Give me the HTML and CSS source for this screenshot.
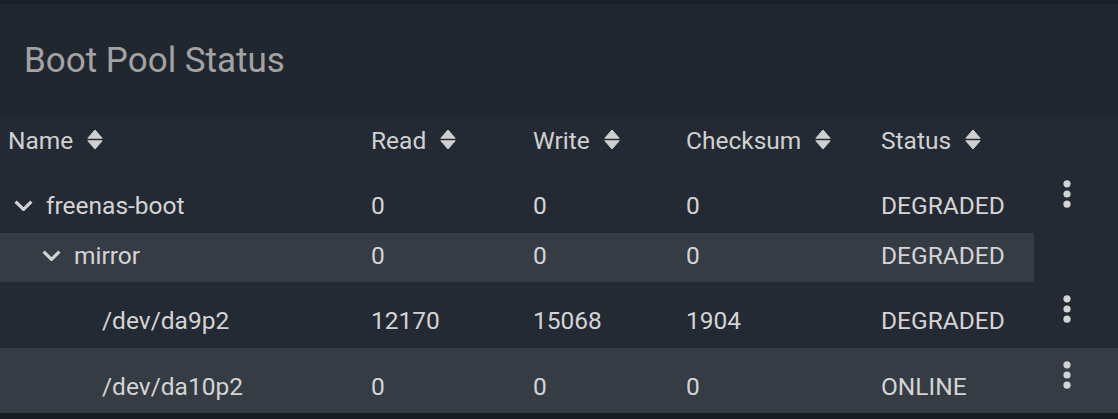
FILE: index.html
```html
<!DOCTYPE html>
<html>
<head>
<meta charset="utf-8">
<link rel="stylesheet" href="styles.css">
</head>
<body>
<div class="topbar"></div>
<div class="card">
  <div class="title">Boot Pool Status</div>
  <div class="table">
    <div class="row head">
      <div class="cells">
        <div class="cell">Name <svg class="sort" viewBox="0 0 16 21"><path d="M0.8 9.2 L8 1 L15.2 9.2 Z" /><path d="M0.8 11.8 L8 20 L15.2 11.8 Z" /></svg></div>
        <div class="cell">Read <svg class="sort" viewBox="0 0 16 21"><path d="M0.8 9.2 L8 1 L15.2 9.2 Z" /><path d="M0.8 11.8 L8 20 L15.2 11.8 Z" /></svg></div>
        <div class="cell">Write <svg class="sort" viewBox="0 0 16 21"><path d="M0.8 9.2 L8 1 L15.2 9.2 Z" /><path d="M0.8 11.8 L8 20 L15.2 11.8 Z" /></svg></div>
        <div class="cell">Checksum <svg class="sort" viewBox="0 0 16 21"><path d="M0.8 9.2 L8 1 L15.2 9.2 Z" /><path d="M0.8 11.8 L8 20 L15.2 11.8 Z" /></svg></div>
        <div class="cell">Status <svg class="sort" viewBox="0 0 16 21"><path d="M0.8 9.2 L8 1 L15.2 9.2 Z" /><path d="M0.8 11.8 L8 20 L15.2 11.8 Z" /></svg></div>
      </div>
      <div class="action"></div>
    </div>

    <div class="row tall">
      <div class="cells">
        <div class="cell name lvl0"><span class="slot"><svg class="chev" viewBox="0 0 19 11"><polyline points="1.6,1.6 9.5,9.4 17.4,1.6" /></svg></span>freenas-boot</div>
        <div class="cell">0</div>
        <div class="cell">0</div>
        <div class="cell">0</div>
        <div class="cell">DEGRADED</div>
      </div>
      <div class="action"><svg class="kebab" viewBox="0 0 8 28"><circle cx="4" cy="3.8" r="3.6"/><circle cx="4" cy="14" r="3.6"/><circle cx="4" cy="24.2" r="3.6"/></svg></div>
    </div>

    <div class="row short">
      <div class="cells shade">
        <div class="cell name lvl1"><span class="slot"><svg class="chev" viewBox="0 0 19 11"><polyline points="1.6,1.6 9.5,9.4 17.4,1.6" /></svg></span>mirror</div>
        <div class="cell">0</div>
        <div class="cell">0</div>
        <div class="cell">0</div>
        <div class="cell">DEGRADED</div>
      </div>
      <div class="action"></div>
    </div>

    <div class="row tall">
      <div class="cells">
        <div class="cell name lvl2"><span class="slot"></span>/dev/da9p2</div>
        <div class="cell">12170</div>
        <div class="cell">15068</div>
        <div class="cell">1904</div>
        <div class="cell">DEGRADED</div>
      </div>
      <div class="action"><svg class="kebab" viewBox="0 0 8 28"><circle cx="4" cy="3.8" r="3.6"/><circle cx="4" cy="14" r="3.6"/><circle cx="4" cy="24.2" r="3.6"/></svg></div>
    </div>

    <div class="row tall last shade">
      <div class="cells">
        <div class="cell name lvl2"><span class="slot"></span>/dev/da10p2</div>
        <div class="cell">0</div>
        <div class="cell">0</div>
        <div class="cell">0</div>
        <div class="cell">ONLINE</div>
      </div>
      <div class="action"><svg class="kebab" viewBox="0 0 8 28"><circle cx="4" cy="3.8" r="3.6"/><circle cx="4" cy="14" r="3.6"/><circle cx="4" cy="24.2" r="3.6"/></svg></div>
    </div>
  </div>
</div>
<div class="bottombar"></div>
</body>
</html>
```

FILE: styles.css
```css
html, body {
  margin: 0;
  padding: 0;
  background: #181b21;
}
body {
  width: 1118px;
  height: 419px;
  overflow: hidden;
  font-family: Roboto, "Liberation Sans", sans-serif;
  font-size: 24.5px;
  color: #d4d4d4;
}
.topbar {
  height: 4px;
  background: #1b1f27;
}
.card {
  background: #21272f;
}
.title {
  height: 76px;
  padding: 37px 0 0 24px;
  font-size: 35px;
  line-height: 40px;
  color: #a3a3a3;
}
.table {
  background: #242a33;
}
.row {
  display: flex;
}
.cells {
  width: 1034px;
  display: grid;
  grid-template-columns: 363px 162px 153px 195px 161px;
}
.action {
  width: 84px;
  box-sizing: border-box;
  padding-left: 29px;
}
.cell {
  padding-left: 8px;
  line-height: 24px;
  display: flex;
  align-items: flex-start;
  white-space: nowrap;
}
.head {
  height: 50px;
  color: #d0d0d0;
}
.head .cell {
  padding-top: 12px;
}
.sort {
  flex: none;
  width: 16px;
  height: 21px;
  margin-left: 14px;
  fill: #d0d0d0;
  stroke: #d0d0d0;
  stroke-width: 1;
  stroke-linejoin: round;
}
.tall {
  height: 66px;
}
.tall.last {
  height: 65px;
}
.tall .cell {
  padding-top: 27px;
}
.tall .action {
  padding-top: 13px;
}
.short {
  height: 49px;
}
.short .cell {
  padding-top: 11px;
}
.shade {
  background: #363c44;
}
.lvl0 { padding-left: 8px; }
.lvl1 { padding-left: 36px; }
.lvl2 { padding-left: 64px; }
.slot {
  width: 38px;
  height: 24px;
  flex: none;
  display: flex;
  align-items: center;
  padding-left: 6px;
  box-sizing: border-box;
}
.chev {
  flex: none;
  width: 19px;
  height: 11px;
  margin-top: -1px;
  fill: none;
  stroke: #d2d2d2;
  stroke-width: 3.2;
}
.kebab {
  width: 8px;
  height: 28px;
  fill: #d4d4d4;
  display: block;
}
.bottombar {
  height: 6px;
  background: #181b21;
}
```
